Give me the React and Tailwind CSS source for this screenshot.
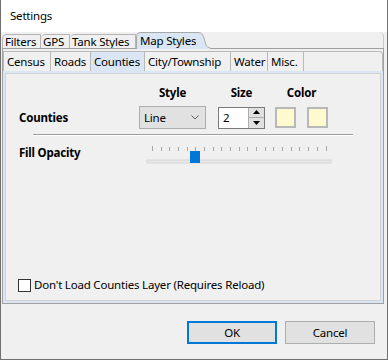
import React from "react";

const font = { fontFamily: '"Noto Sans", "Open Sans", sans-serif' };

// tick positions on the opacity slider
const ticks = Array.from({ length: 21 }, (_, i) => 7 + i * 8.675);

const OuterTab = ({ label, w, first }) => (
  <div
    className={
      "h-[14px] flex items-center border-t border-r border-[#b4b4b4] rounded-tl-[5px] bg-[#f0f0f0] whitespace-nowrap overflow-hidden shrink-0 " +
      (first ? "border-l " : "")
    }
    style={{ width: w }}>
    <span className="pl-[2px] leading-none">{label}</span>
  </div>
);

const InnerTab = ({ label, w, active }) => (
  <div
    className={
      "h-full flex items-center pl-[3px] border-r border-[#b9b9b9] whitespace-nowrap shrink-0 " +
      (active ? "bg-[#dae6f3]" : "")
    }
    style={{ width: w }}>
    <span className="leading-none">{label}</span>
  </div>
);

export default function App() {
  return (
    <div
      className="w-[388px] h-[360px] bg-[#f0f0f0] border-x border-b border-[#707070] flex flex-col text-[11.5px] tracking-[-0.2px] text-black"
      style={font}>
      {/* title bar */}
      <div className="h-[32px] bg-white flex items-center pl-[9px] shrink-0">
        Settings
      </div>

      {/* outer tab strip */}
      <div className="h-[16px] flex items-end pl-[1px] pr-[3px] shrink-0">
        <OuterTab label="Filters" w={39} first />
        <OuterTab label="GPS" w={29} />
        <OuterTab label="Tank Styles" w={66} />
        <div className="h-[16px] flex items-end -mb-[1px] relative z-10 shrink-0">
          <div className="h-[17px] w-[60px] bg-[#dae6f3] border-t border-l border-[#a8a8a8] rounded-tl-[5px] flex items-center pl-[3px] whitespace-nowrap">
            <span className="leading-none">Map Styles</span>
          </div>
          <svg width="14" height="17" viewBox="0 0 14 17" className="block">
            <path d="M0 0 C6 0 6 1 8 6 C10 13 10 16 14 16 L14 17 L0 17 Z" fill="#dae6f3" />
            <path d="M0 0.5 C6 0.5 6 1 8 6 C10 13 10 15.5 14 15.5" fill="none" stroke="#a8a8a8" />
          </svg>
        </div>
        <div className="flex-1 h-[16px] rounded-tr-[5px] border-r border-[#c8c8c8]" />
      </div>

      {/* outer pane */}
      <div className="ml-[1px] mr-[3px] h-[256px] border border-[#a0a0a0] pt-[2px] flex flex-col shrink-0">
        {/* inner tab strip */}
        <div className="h-[20px] flex border-t border-l border-r border-[#b9b9b9] rounded-tr-[4px] shrink-0">
          <InnerTab label="Census" w={47} />
          <InnerTab label="Roads" w={40} />
          <InnerTab label="Counties" w={54} active />
          <InnerTab label="City/Township" w={86} />
          <InnerTab label="Water" w={37} />
          <InnerTab label="Misc." w={36} />
        </div>

        {/* inner pane */}
        <div className="flex-1 border-2 border-[#dae6f3] flex flex-col">
          <div className="flex-1 border border-[#d2d2d2] flex flex-col">
            {/* column headers */}
            <div className="flex h-[16px] mt-[11px] pl-[13px] font-bold items-center">
              <div className="w-[120px]" />
              <div className="w-[67px] text-center">Style</div>
              <div className="w-[47px] ml-[12px] text-center">Size</div>
              <div className="w-[53px] ml-[10px] text-center">Color</div>
            </div>

            {/* counties row */}
            <div className="flex h-[23px] mt-[5px] pl-[13px] items-center">
              <div className="w-[120px] font-bold pt-[1px]">Counties</div>
              <div className="w-[67px] h-[23px] border border-[#adadad] bg-[#e1e1e1] flex items-center justify-between pl-[4px] pr-[6px]">
                <span>Line</span>
                <svg width="8" height="5" viewBox="0 0 8 5">
                  <path d="M0.5 0.5 L4 4 L7.5 0.5" fill="none" stroke="#606060" />
                </svg>
              </div>
              <div className="w-[47px] h-[22px] ml-[12px] border border-[#7a7a7a] bg-white flex">
                <div className="flex-1 flex items-center pl-[4px]">2</div>
                <div className="w-[16px] flex flex-col border-l border-[#adadad]">
                  <div className="flex-1 bg-[#e1e1e1] border-b border-[#adadad] flex items-center justify-center">
                    <svg width="7" height="4" viewBox="0 0 7 4">
                      <path d="M0 4 L3.5 0 L7 4 Z" fill="#000" />
                    </svg>
                  </div>
                  <div className="flex-1 bg-[#e1e1e1] flex items-center justify-center">
                    <svg width="7" height="4" viewBox="0 0 7 4">
                      <path d="M0 0 L3.5 4 L7 0 Z" fill="#000" />
                    </svg>
                  </div>
                </div>
              </div>
              <div className="w-[21px] h-[21px] ml-[10px] border-2 border-[#b8b8b8] bg-[#fffacd]" />
              <div className="w-[21px] h-[21px] ml-[11px] border-2 border-[#b8b8b8] bg-[#fffacd]" />
            </div>

            {/* etched divider */}
            <div className="ml-[27px] w-[320px] mt-[5px] border-t border-[#a0a0a0] border-b border-b-white" />

            {/* fill opacity row */}
            <div className="flex mt-[9px] pl-[13px] items-start">
              <div className="w-[126px] font-bold -mt-[1px]">Fill Opacity</div>
              <svg width="190" height="20" viewBox="0 0 190 20" className="block">
                {ticks.map((x, i) => (
                  <line
                    key={i}
                    x1={Math.round(x) + 0.5}
                    x2={Math.round(x) + 0.5}
                    y1={i === 0 || i === 20 ? 1 : 2}
                    y2={6}
                    stroke="#a8a8a8"
                  />
                ))}
                <rect x="2" y="15" width="184" height="3" fill="#e7e7e7" stroke="#d6d6d6" />
                <rect x="45" y="6" width="10" height="12" fill="#0078d7" />
              </svg>
            </div>

            {/* checkbox */}
            <div className="mt-auto mb-[7px] pl-[12px] flex items-center h-[16px]">
              <div className="w-[13px] h-[13px] border border-[#333] bg-white" />
              <span className="ml-[3px]">Don't Load Counties Layer (Requires Reload)</span>
            </div>
          </div>
        </div>
      </div>

      {/* buttons */}
      <div className="flex justify-end gap-[8px] pr-[12px] mt-[17px]">
        <button className="w-[90px] h-[23px] border-2 border-[#0078d7] bg-[#e1e1e1]">OK</button>
        <button className="w-[90px] h-[23px] border border-[#adadad] bg-[#e1e1e1]">Cancel</button>
      </div>
    </div>
  );
}
